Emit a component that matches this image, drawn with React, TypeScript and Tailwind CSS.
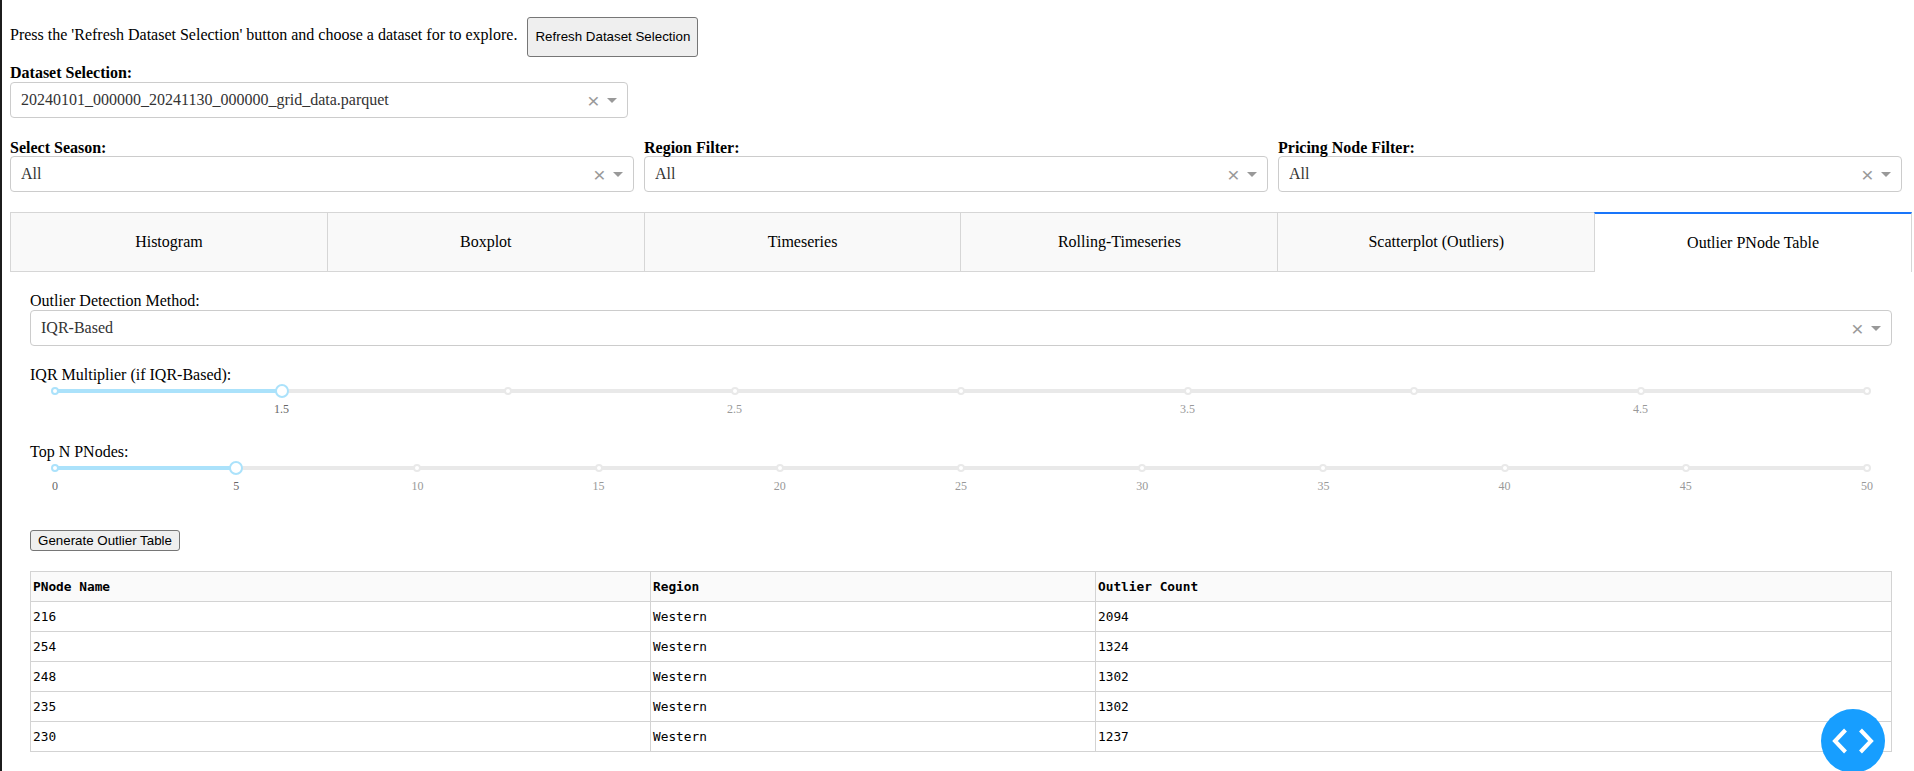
const rows = [
  ['216', 'Western', '2094'],
  ['254', 'Western', '1324'],
  ['248', 'Western', '1302'],
  ['235', 'Western', '1302'],
  ['230', 'Western', '1237'],
];

const tabs = ['Histogram', 'Boxplot', 'Timeseries', 'Rolling-Timeseries', 'Scatterplot (Outliers)'];

function Select({ value }: { value: string }) {
  return (
    <div className="flex h-[36px] items-center rounded-[4px] border border-[#ccc] bg-white pl-[10px] pr-[10px] text-[#333]">
      <span className="flex-1 truncate">{value}</span>
      <span className="w-[17px] text-center font-['Liberation_Sans',sans-serif] text-[21px] leading-none text-[#999]">×</span>
      <span className="ml-[5px] h-0 w-0 border-x-[5px] border-t-[5px] border-x-transparent border-t-[#999]" />
    </div>
  );
}

function Slider({
  dots,
  percent,
  labels,
  active,
}: {
  dots: number;
  percent: number;
  labels: { text: string; at: number }[];
  active: number;
}) {
  return (
    <div className="relative mx-[25px] mt-[3px] h-[8px]">
      <div className="absolute inset-x-0 top-[2px] h-[4px] bg-[#e9e9e9]" />
      <div className="absolute left-0 top-[2px] h-[4px] bg-[#abe2fb]" style={{ width: `${percent}%` }} />
      {Array.from({ length: dots }).map((_, i) => {
        const at = (i / (dots - 1)) * 100;
        return (
          <span
            key={i}
            className={`absolute top-0 h-[8px] w-[8px] -translate-x-1/2 rounded-full border-2 bg-white ${
              at <= percent ? 'border-[#abe2fb]' : 'border-[#e9e9e9]'
            }`}
            style={{ left: `${at}%` }}
          />
        );
      })}
      <span
        className="absolute top-[-3px] h-[14px] w-[14px] -translate-x-1/2 rounded-full border-2 border-[#abe2fb] bg-white"
        style={{ left: `${percent}%` }}
      />
      {labels.map((l) => (
        <span
          key={l.text}
          className={`absolute top-[15px] -translate-x-1/2 text-[12px] leading-[14px] ${
            l.at <= active ? 'text-[#666]' : 'text-[#999]'
          }`}
          style={{ left: `${l.at}%` }}
        >
          {l.text}
        </span>
      ))}
    </div>
  );
}

export default function App() {
  return (
    <div className="relative h-[771px] overflow-hidden border-l-2 border-[#1c1c1c] bg-white pl-2 pr-[2px] font-['Liberation_Serif',serif] text-[16px] leading-[18px] text-black">
      <div className="flex pt-[17px]">
        <p className="pt-[9px]">Press the 'Refresh Dataset Selection' button and choose a dataset for to explore.</p>
        <button className="ml-[10px] h-[40px] w-[171px] rounded-[3px] border border-[#767676] bg-[#efefef] font-['Liberation_Sans',sans-serif] text-[13.33px]">
          Refresh Dataset Selection
        </button>
      </div>

      <div className="mt-[7px] w-[618px]">
        <label className="block font-bold">Dataset Selection:</label>
        <Select value="20240101_000000_20241130_000000_grid_data.parquet" />
      </div>

      <div className="mt-[20px] grid w-[1892px] grid-cols-3 gap-x-[10px]">
        <div>
          <label className="block h-[18px] font-bold leading-[20px]">Select Season:</label>
          <Select value="All" />
        </div>
        <div>
          <label className="block h-[18px] font-bold leading-[20px]">Region Filter:</label>
          <Select value="All" />
        </div>
        <div>
          <label className="block h-[18px] font-bold leading-[20px]">Pricing Node Filter:</label>
          <Select value="All" />
        </div>
      </div>

      <div className="mt-[20px] flex h-[60px]">
        {tabs.map((t) => (
          <div
            key={t}
            className="flex flex-1 items-center justify-center border-y border-l border-[#d6d6d6] bg-[#f9f9f9]"
          >
            {t}
          </div>
        ))}
        <div className="flex flex-1 items-center justify-center border-x border-t-2 border-x-[#d6d6d6] border-t-[#1975fa] bg-white">
          Outlier PNode Table
        </div>
      </div>

      <div className="px-5">
        <label className="mt-[20px] block">Outlier Detection Method:</label>
        <Select value="IQR-Based" />

        <label className="mt-[20px] block">IQR Multiplier (if IQR-Based):</label>
        <Slider
          dots={9}
          percent={12.5}
          active={12.5}
          labels={[
            { text: '1.5', at: 12.5 },
            { text: '2.5', at: 37.5 },
            { text: '3.5', at: 62.5 },
            { text: '4.5', at: 87.5 },
          ]}
        />

        <label className="mt-[48px] block">Top N PNodes:</label>
        <Slider
          dots={11}
          percent={10}
          active={10}
          labels={Array.from({ length: 11 }).map((_, i) => ({ text: String(i * 5), at: i * 10 }))}
        />

        <button className="mt-[58px] block h-[21px] w-[150px] rounded-[3px] border border-[#767676] bg-[#efefef] font-['Liberation_Sans',sans-serif] text-[13.33px] leading-none">
          Generate Outlier Table
        </button>

        <table className="mt-[20px] w-full table-fixed border-collapse font-['DejaVu_Sans_Mono',monospace] text-[12.8px] leading-none">
          <colgroup>
            <col className="w-[620px]" />
            <col className="w-[445px]" />
            <col />
          </colgroup>
          <thead>
            <tr className="h-[30px] bg-[#fafafa]">
              <th className="border border-[#d3d3d3] px-[2px] pt-[2px] text-left font-bold">PNode Name</th>
              <th className="border border-[#d3d3d3] px-[2px] pt-[2px] text-left font-bold">Region</th>
              <th className="border border-[#d3d3d3] px-[2px] pt-[2px] text-left font-bold">Outlier Count</th>
            </tr>
          </thead>
          <tbody>
            {rows.map((r) => (
              <tr key={r[0]} className="h-[30px]">
                {r.map((c, i) => (
                  <td key={i} className="border border-[#d3d3d3] px-[2px] pt-[2px]">
                    {c}
                  </td>
                ))}
              </tr>
            ))}
          </tbody>
        </table>
      </div>

      <div className="fixed bottom-[-2px] right-[29px] flex h-[64px] w-[64px] items-center justify-center rounded-full bg-[#179eff]">
        <svg width="44" height="26" viewBox="0 0 44 26" fill="none" stroke="white" strokeWidth="4">
          <path d="M14.5 2 L4 13 L14.5 24" />
          <path d="M29.5 2 L40 13 L29.5 24" />
        </svg>
      </div>
    </div>
  );
}
